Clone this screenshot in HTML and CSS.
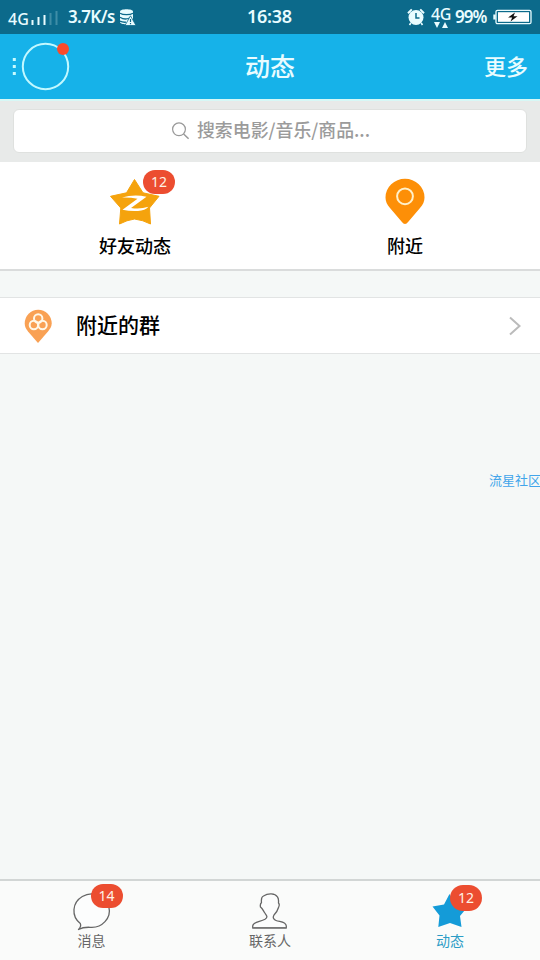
FILE: index.html
```html
<!DOCTYPE html>
<html lang="zh-CN">
<head>
<meta charset="utf-8">
<title>动态</title>
<link rel="stylesheet" href="styles.css">
</head>
<body>
<div class="app">
  <div class="status">
    <div class="status-left">
      <span class="net">4G</span>
      <svg class="bars" width="28" height="18" viewBox="0 0 28 18"><path d="M1.500 12v5M7.500 9v8M13.500 7v10" stroke="#e9fcff" stroke-width="2"/><path d="M19.500 5v12M25.500 3v14" stroke="#3f8da7" stroke-width="2"/></svg>
      <span class="speed">3.7K/s</span>
      <svg class="db" width="16" height="17" viewBox="0 0 16 17"><path d="M0 2.500C0-.5 13-.5 13 2.500V13c-2 3-13 3-13 0z" fill="#e9fcff"/><path d="M0 4.200c3 2 10 2 13 0M0 8.200c3 2 7 2 9.500.8M0 12.200c2 1 4 1.200 6 1" fill="none" stroke="#0c6a8b" stroke-width="1.300"/><path d="M10.500 6.800L16 16.500H5z" fill="#e9fcff" stroke="#0c6a8b" stroke-width=".8"/><path d="M10.500 10v3M10.500 14v1.300" stroke="#0c6a8b" stroke-width="1.200"/></svg>
    </div>
    <span class="clock">16:38</span>
    <div class="status-right">
      <svg class="alarm" width="18" height="18" viewBox="0 0 18 18"><circle cx="9" cy="9.500" r="7.500" fill="#e9fcff"/><path d="M1 5.200L4.800 1.400M17 5.200L13.200 1.400" stroke="#e9fcff" stroke-width="2"/><path d="M3.800 15L2.500 17M14.200 15l1.300 2" stroke="#e9fcff" stroke-width="1.600"/><path d="M9 5v5h3.500" fill="none" stroke="#0c6a8b" stroke-width="1.500"/></svg>
      <div class="data"><span class="data-label">4G</span><svg width="16" height="6" viewBox="0 0 16 6"><path d="M1 0h6L4 6zM9 6h6l-3-6z" fill="#e9fcff"/></svg></div>
      <span class="percent">99%</span>
      <svg class="battery" width="40" height="16" viewBox="0 0 40 16"><path d="M2.500 5.500v5" stroke="#e9fcff" stroke-width="2.400"/><rect x="4" y="1.300" width="35" height="13.400" rx="1.500" fill="none" stroke="#e9fcff" stroke-width="1.300"/><rect x="6" y="3.200" width="31" height="9.600" fill="#fff"/><path d="M23 3.600l-7 5h4.200L18.500 12.500l7-5.200h-4z" fill="#111"/></svg>
    </div>
  </div>

  <header class="header">
    <div class="profile">
      <svg width="60" height="50" viewBox="0 0 60 50"><path d="M2.800 10h3v3h-3zM2.800 17h3v3h-3zM2.800 24h3v3h-3z" fill="#c8fbff"/><circle cx="35.500" cy="18.500" r="22.700" fill="none" stroke="#c2f8ff" stroke-width="2"/><circle cx="53" cy="1" r="6" fill="#fa4a2b"/></svg>
    </div>
    <h1 class="title">动态</h1>
    <span class="more">更多</span>
  </header>

  <div class="search-area">
    <div class="search">
      <svg width="20" height="20" viewBox="0 0 20 20"><circle cx="8" cy="8.300" r="6.400" fill="none" stroke="#999" stroke-width="1.200"/><path d="M12.600 13l5 4.700" stroke="#999" stroke-width="1.500"/></svg>
      <span class="search-hint">搜索电影/音乐/商品...</span>
    </div>
  </div>

  <div class="shortcuts">
    <div class="shortcut">
      <div class="shortcut-icon">
        <svg width="52" height="48" viewBox="0 0 52 48"><path d="M25.500 1.500L34 14.800 50 18.300 40.500 30 41.500 46Q34 42 25.500 41 18 42 10.500 46L11.800 30 1.500 18.300 17.500 14.800z" fill="#f5a30d" stroke="#f5a30d" stroke-width="1" stroke-linejoin="round"/><path d="M13 19.500Q25 16 37.500 18.700L22 30Q31 31.500 39.500 28.800 36 32.500 29 33 21 33.500 13.500 31.800L28.500 20.800Q21 19.200 13 19.500z" fill="#fff"/></svg>
        <span class="badge">12</span>
      </div>
      <span class="shortcut-label">好友动态</span>
    </div>
    <div class="shortcut">
      <div class="shortcut-icon">
        <svg width="52" height="48" viewBox="0 0 52 48"><path d="M26 46Q24.500 46 22.500 43.500L11 30C8 26.500 6.500 23.500 6.500 19.500A19.500 18.700 0 0 1 45.500 19.500C45.500 23.500 44 26.500 41 30L29.500 43.500Q27.500 46 26 46z" fill="#fd8f07"/><circle cx="26" cy="18.300" r="7.900" fill="none" stroke="#fff0c9" stroke-width="2"/></svg>
      </div>
      <span class="shortcut-label">附近</span>
    </div>
  </div>

  <div class="row">
    <svg class="row-pin" width="28" height="34" viewBox="0 0 28 34"><path d="M14 34L4 22.500C2 20 .7 17.500 .7 14.500A13.500 13.800 0 0 1 27.700 14.500C27.700 17.500 26 20 24 22.500z" fill="#f9a154"/><g fill="none" stroke="#fff8e8" stroke-width="2"><circle cx="14.200" cy="9.500" r="4.200"/><circle cx="9.900" cy="16" r="4.200"/><circle cx="18.500" cy="16" r="4.200"/></g></svg>
    <span class="row-label">附近的群</span>
    <svg class="chevron" width="14" height="20" viewBox="0 0 14 20"><path d="M2 1.500L11.500 10 2 18.500" fill="none" stroke="#bbb" stroke-width="2"/></svg>
  </div>

  <main class="content"><span class="mark">流星社区</span></main>

  <nav class="tabs">
    <div class="tab messages">
      <div class="tab-icon"><svg width="40" height="40" viewBox="0 0 40 40"><path d="M5.500 37.500C7.500 35.500 8.200 33.500 7.300 31.500A17.700 16.700 0 1 1 17 35.300Q10 35 5.500 37.500z" fill="#fcfdfd" stroke="#666" stroke-width="1.300" stroke-linejoin="round"/></svg><span class="badge">14</span></div>
      <span class="tab-label">消息</span>
    </div>
    <div class="tab">
      <div class="tab-icon"><svg width="40" height="40" viewBox="0 0 40 40"><path d="M2.700 36V34C3 29.500 10 30 15 27.300 18.500 25 16.500 23.500 14.500 20.500 13.200 18.500 12.500 16.500 10.500 15 10 13 10.500 11.500 11.500 10.500 11 6 12 4.500 13.500 4 18 1 25 1 27.500 5 29 7 28.500 9 28.500 11 29.500 12 29.500 13.500 28.500 15.500 27.500 19 26 21 24 23 22.500 25.500 23.500 27.500 26 28.500 30 30 36 29.500 36.300 34V36z" fill="#fcfdfd" stroke="#666" stroke-width="1.300" stroke-linejoin="round"/><path d="M2.500 35.500h34" stroke="#777" stroke-width="1.200"/></svg></div>
      <span class="tab-label">联系人</span>
    </div>
    <div class="tab active">
      <div class="tab-icon"><svg width="40" height="40" viewBox="0 0 40 40"><path d="M19.500 2L25.500 12.500 37 15.500 30 24 31.500 35 20 31 8.300 35 9.500 23.500 2.500 14.500 14 12.500z" fill="#149bd8"/></svg><span class="badge low">12</span></div>
      <span class="tab-label">动态</span>
    </div>
  </nav>
</div>
</body>
</html>
```
FILE: styles.css
```css
* { box-sizing: border-box; }
body { margin: 0; font-family: "Noto Sans", "Noto Sans CJK SC", sans-serif; }
svg { display: block; flex: none; overflow: visible; }
.app { width: 540px; height: 960px; display: flex; flex-direction: column; background: #f5f8f7; overflow: hidden; }

.status { height: 34px; flex: none; display: grid; grid-template-columns: 1fr auto 1fr; padding: 0 8px; background: #0c6a8b; color: #e9fcff; font-size: 17px; font-weight: 600; line-height: 34px; letter-spacing: -0.4px; }
.status-left, .status-right { display: flex; align-items: center; white-space: nowrap; height: 34px; }
.status-right { justify-content: flex-end; }
.net { font-size: 16px; font-weight: 500; padding-top: 3px; letter-spacing: 0; width: 23px; }
.speed { margin: 0 0 1px 9px; width: 47px; letter-spacing: -0.6px; }
.db { margin-left: 5px; }
.clock { width: 46px; font-size: 18px; letter-spacing: -0.3px; line-height: 32px; }
.alarm { margin-bottom: 1px; }
.data { display: flex; flex-direction: column; align-items: center; margin-left: 6px; width: 20px; }
.data-label { font-size: 16px; font-weight: 500; line-height: 15px; }
.percent { margin: 0 0 1px 4px; width: 32px; letter-spacing: -1px; }
.battery { margin: 0 0 1px 5px; }

.header { height: 67px; flex: none; display: grid; grid-template-columns: 1fr auto 1fr; align-items: center; padding: 0 12px 1px 10px; background: #16b2e9; border-bottom: 2px solid #d7f8f6; color: #e9fcff; font-family: "Noto Sans CJK SC", sans-serif; }
.profile { height: 36px; }
.title { margin: 0 -1px 2px 1px; font-size: 25px; font-weight: 500; line-height: 36px; }
.more { justify-self: end; margin-bottom: 3px; font-size: 22px; line-height: 32px; font-weight: 500; }

.search-area { height: 61px; flex: none; padding: 8px 13px 9px; background: #e8eae9; }
.search { height: 44px; display: flex; align-items: center; justify-content: center; gap: 6px; padding-left: 1px; background: #fff; border: 1px solid #dfe1df; border-radius: 6px; color: #9b9b9b; font-family: "Noto Sans CJK SC", sans-serif; font-size: 17.900px; }
.search-hint { margin-bottom: 4px; font-weight: 500; }

.shortcuts { height: 109px; flex: none; display: grid; grid-template-columns: 1fr 1fr; background: #fff; border-bottom: 2px solid #dadcdc; }
.shortcut { display: flex; flex-direction: column; align-items: center; padding-top: 16px; }
.shortcut-icon, .tab-icon { position: relative; }
.shortcut-label { margin-top: 6px; font-family: "Noto Sans CJK SC", sans-serif; font-size: 18px; line-height: 26px; font-weight: 500; color: #000; }
.badge { position: absolute; width: 32px; height: 24px; border-radius: 12px; background: #ec4d30; color: #fff1e6; font-family: "Noto Sans", sans-serif; font-size: 14px; line-height: 24px; text-align: center; }
.shortcut .badge { left: 34px; top: -8px; }

.row { height: 57px; flex: none; margin-top: 26px; display: flex; align-items: center; padding: 0 18px 0 24px; background: #fff; border: solid #e2e4e4; border-width: 1px 0; }
.row-label { flex: 1; margin: 0 0 4px 24px; font-family: "Noto Sans CJK SC", sans-serif; font-size: 21px; font-weight: 500; color: #000; }

.content { flex: 1; display: flex; justify-content: flex-end; align-items: flex-start; padding-top: 116px; }
.mark { font-family: "Noto Sans CJK SC", sans-serif; font-size: 13px; line-height: 20px; color: #42a5ea; margin-right: -1px; }

.tabs { height: 81px; flex: none; display: grid; grid-template-columns: 1fr 1fr 1fr; background: #fafbfa; border-top: 2px solid #d2d6d5; }
.tab { display: flex; flex-direction: column; align-items: center; padding-top: 11px; font-family: "Noto Sans CJK SC", sans-serif; font-size: 14px; line-height: 20px; color: #666; }
.tab.messages { padding-left: 3px; }
.messages svg { margin-left: 1px; margin-right: -1px; }
.tab-label { margin-top: -2px; }
.tab.active { color: #2b9cc6; }
.tab .badge { left: 20px; top: -8px; }
.tab.messages .badge { left: 19px; }
.tab .badge.low { top: -7px; height: 26px; border-radius: 13px; line-height: 26px; }
```
